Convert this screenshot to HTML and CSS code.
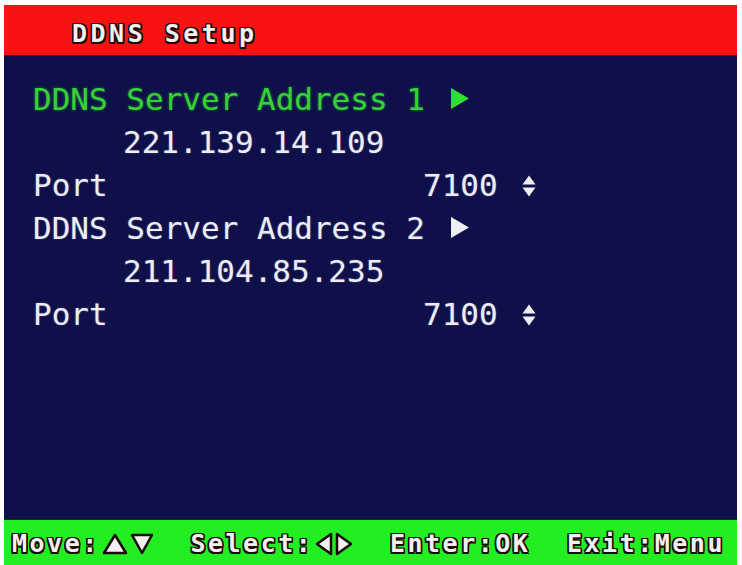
FILE: index.html
```html
<!DOCTYPE html>
<html>
<head>
<meta charset="utf-8">
<link rel="stylesheet" href="styles.css">
</head>
<body>
<div class="screen">
  <div class="titlebar"><span class="title">DDNS Setup</span></div>
  <div class="main">
    <div class="row sel">
      <span class="text">DDNS Server Address 1</span>
      <svg class="arrow" width="20" height="21" viewBox="0 0 20 21"><polygon points="1,0 19,10.5 1,21" fill="#2fe02f"/></svg>
    </div>
    <div class="row ip"><span class="text">221.139.14.109</span></div>
    <div class="row">
      <span class="label">Port</span><span class="val">7100</span>
      <svg class="updown" width="14" height="22" viewBox="0 0 14 22"><polygon points="7,0.5 13.5,9.5 0.5,9.5" fill="#eeeef4"/><polygon points="0.5,12.5 13.5,12.5 7,21.5" fill="#eeeef4"/></svg>
    </div>
    <div class="row">
      <span class="text">DDNS Server Address 2</span>
      <svg class="arrow" width="20" height="21" viewBox="0 0 20 21"><polygon points="1,0 19,10.5 1,21" fill="#eeeef4"/></svg>
    </div>
    <div class="row ip"><span class="text">211.104.85.235</span></div>
    <div class="row">
      <span class="label">Port</span><span class="val">7100</span>
      <svg class="updown" width="14" height="22" viewBox="0 0 14 22"><polygon points="7,0.5 13.5,9.5 0.5,9.5" fill="#eeeef4"/><polygon points="0.5,12.5 13.5,12.5 7,21.5" fill="#eeeef4"/></svg>
    </div>
  </div>
  <div class="footer">
    <span class="grp">Move:<svg class="ftri" width="26" height="22" viewBox="0 0 26 22"><polygon points="13,2 24,20 2,20" fill="#f4f0f0" stroke="#1a0a0a" stroke-width="2.5" stroke-linejoin="round"/></svg><svg class="ftri" width="24" height="22" viewBox="0 0 24 22"><polygon points="2,2 22,2 12,20" fill="#f4f0f0" stroke="#1a0a0a" stroke-width="2.5" stroke-linejoin="round"/></svg></span>
    <span class="grp">Select:<svg class="ftri" width="18" height="24" viewBox="0 0 18 24"><polygon points="16,2 16,22 2,12" fill="#f4f0f0" stroke="#1a0a0a" stroke-width="2.5" stroke-linejoin="round"/></svg><svg class="ftri" width="18" height="24" viewBox="0 0 18 24"><polygon points="2,2 2,22 16,12" fill="#f4f0f0" stroke="#1a0a0a" stroke-width="2.5" stroke-linejoin="round"/></svg></span>
    <span class="grp">Enter:OK</span>
    <span class="grp">Exit:Menu</span>
  </div>
</div>
</body>
</html>
```

FILE: styles.css
```css
html, body {
  margin: 0;
  padding: 0;
  background: #ffffff;
}
.screen {
  margin: 5px 5px 0 4px;
  height: 560px;
  display: flex;
  flex-direction: column;
  font-family: "DejaVu Sans Mono", "Liberation Mono", monospace;
}
.titlebar {
  height: 51px;
  background: #f81212;
  border-bottom: 1px solid #5a0a20;
  box-sizing: border-box;
  display: flex;
  align-items: center;
  padding: 6px 0 0 68px;
}
.title, .footer {
  font-weight: bold;
  font-size: 25px;
  letter-spacing: 3.5px;
  color: #f4f0f0;
  text-shadow: -1.5px 0 0 #1a0a0a, 1.5px 0 0 #1a0a0a, 0 -1.5px 0 #1a0a0a, 0 1.5px 0 #1a0a0a,
    -1.5px -1.5px 0 #1a0a0a, 1.5px 1.5px 0 #1a0a0a, -1.5px 1.5px 0 #1a0a0a, 1.5px -1.5px 0 #1a0a0a;
}
.main {
  flex: 1;
  background: #0f1049;
  padding: 22px 0 0 29px;
  font-size: 31px;
  line-height: 43px;
  color: #ececf2;
}
.row {
  display: flex;
  align-items: center;
  height: 43px;
  text-shadow: 0 0 2px rgba(200, 200, 255, 0.35);
}
.row.sel {
  color: #35d235;
  text-shadow: 0 0 3px rgba(60, 230, 60, 0.5);
}
.row.ip {
  padding-left: 90px;
}
.arrow {
  margin-left: 25px;
  margin-top: -2px;
}
.label {
  width: 390px;
}
.updown {
  margin-left: 24px;
}
.footer {
  height: 46px;
  background: #22ee22;
  border-top: 1px solid #0a3a0a;
  box-sizing: border-box;
  display: flex;
  align-items: center;
  justify-content: space-between;
  padding: 2px 12px 0 8px;
  letter-spacing: 2.5px;
}
.grp {
  display: flex;
  align-items: center;
}
.ftri {
  margin-left: 2px;
}
```
